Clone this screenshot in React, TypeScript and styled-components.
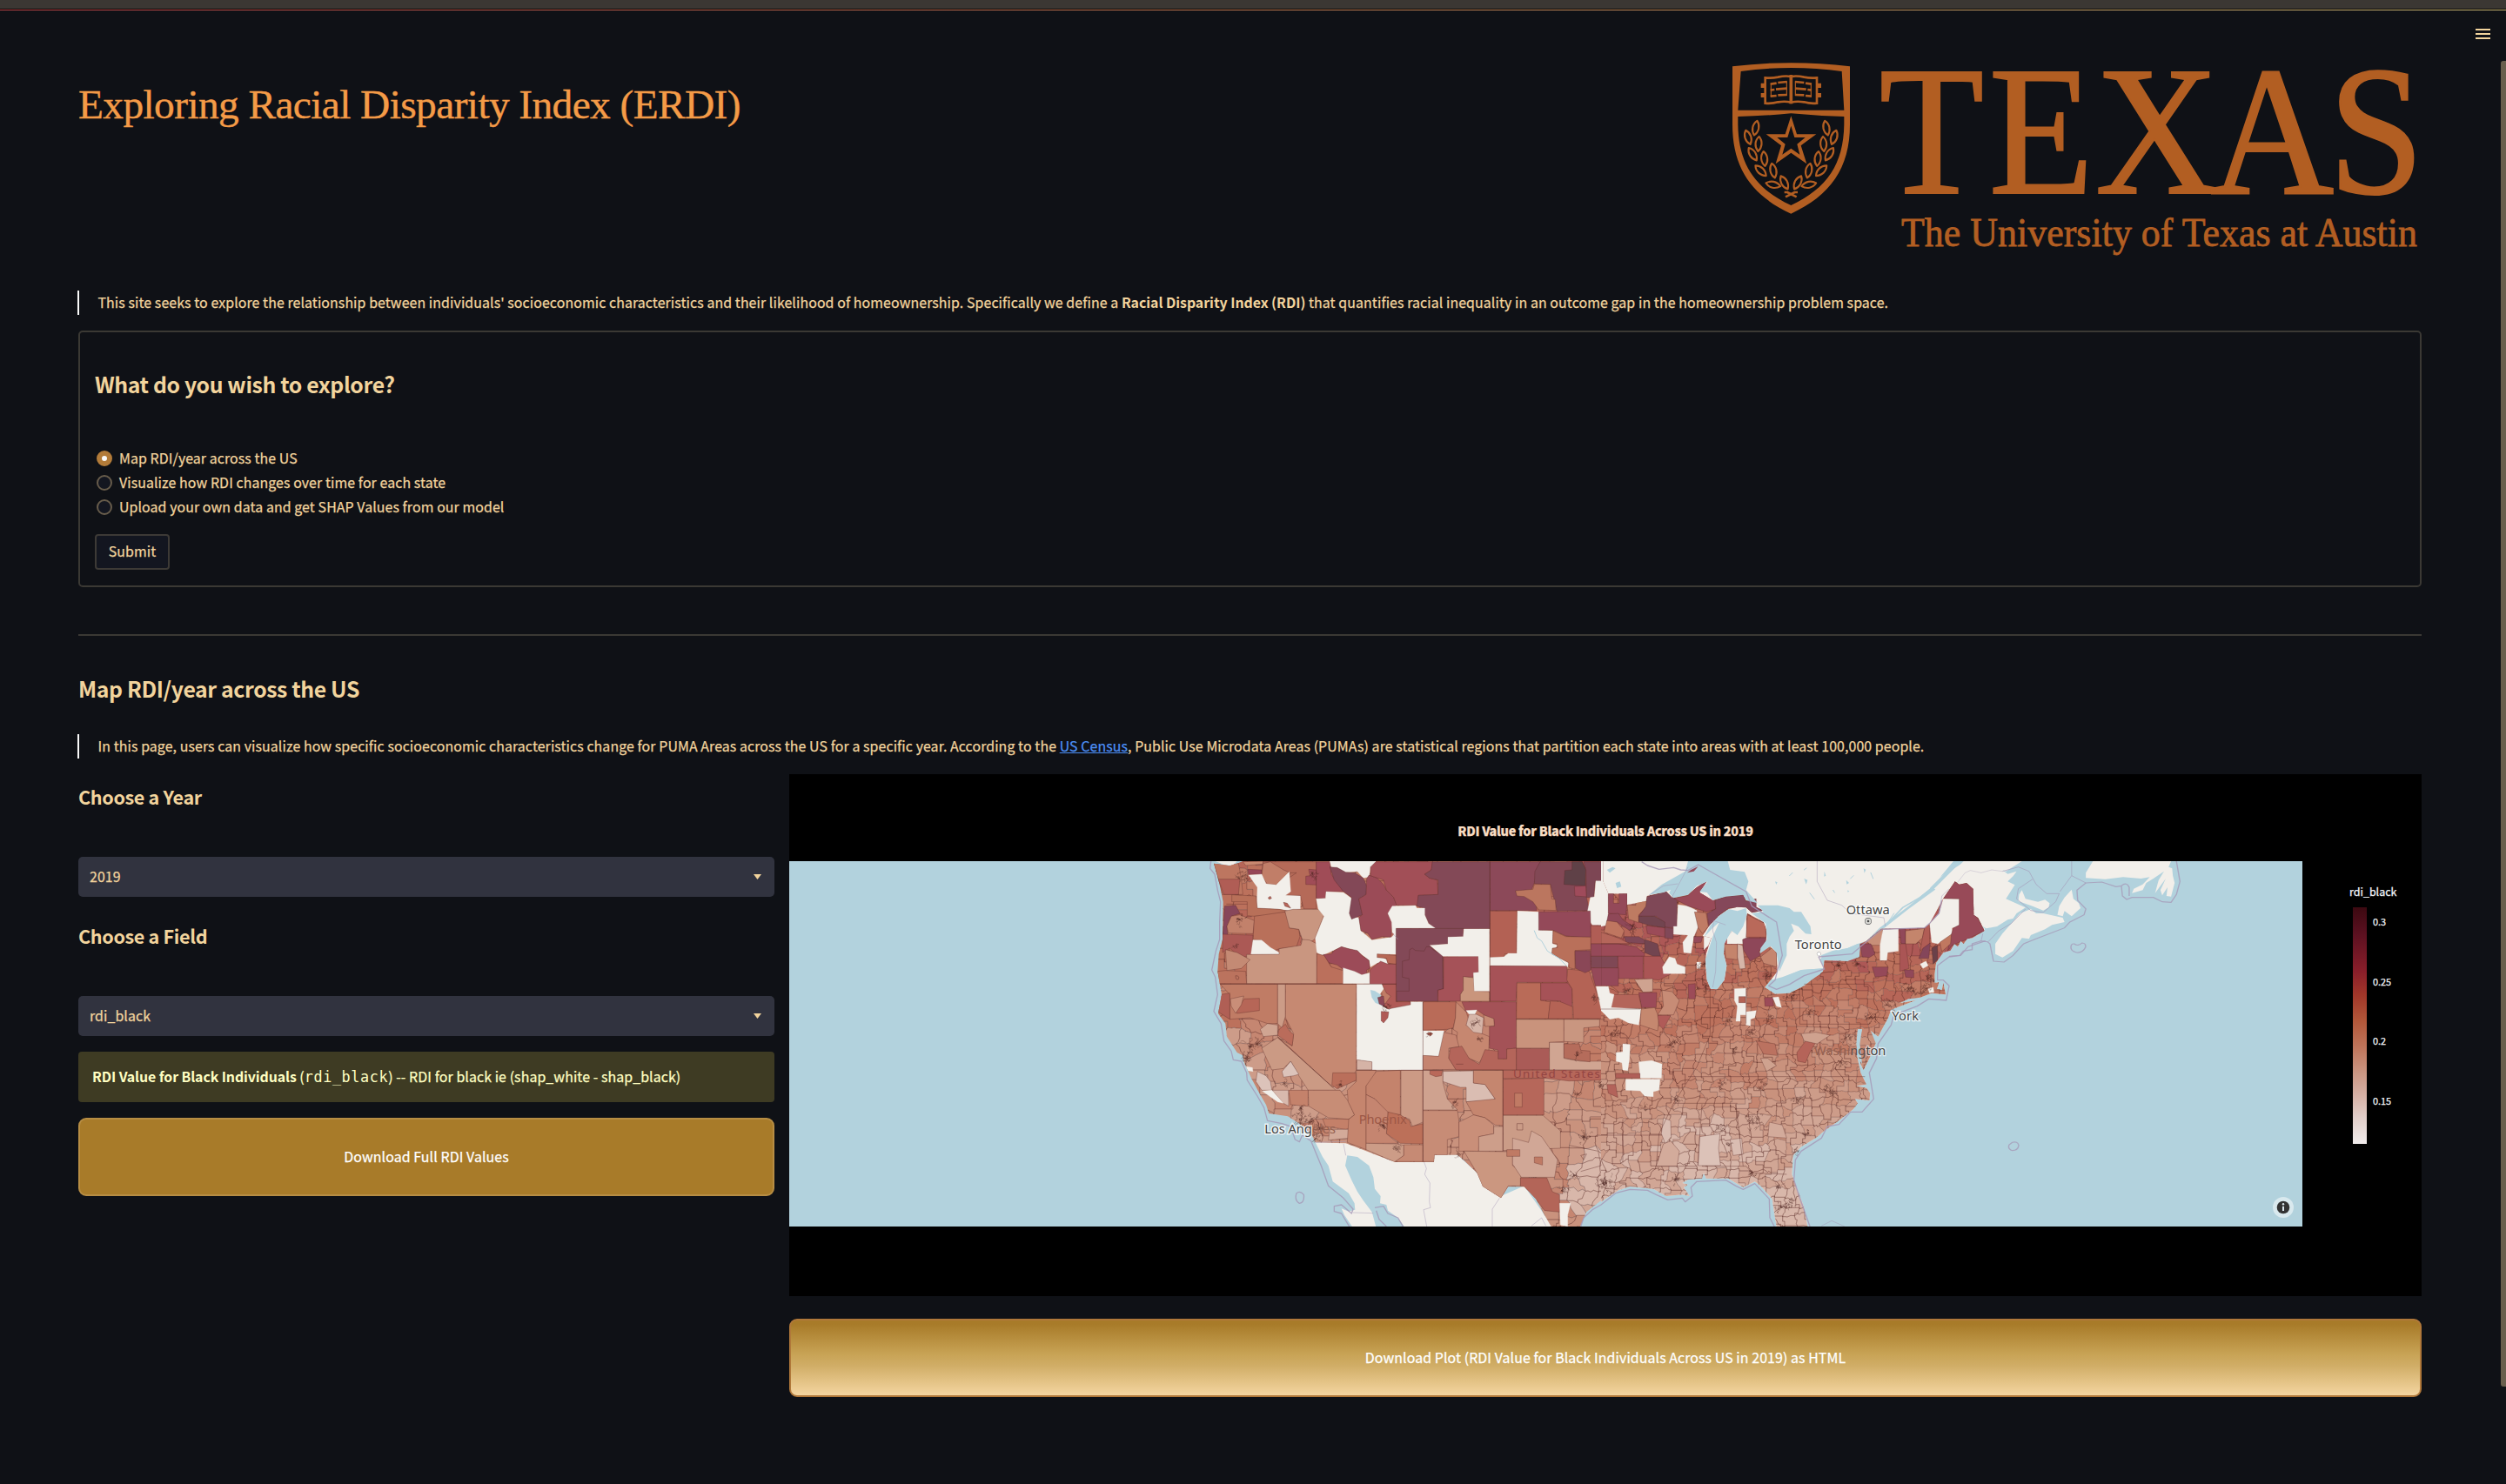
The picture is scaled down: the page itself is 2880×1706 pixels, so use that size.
import React from "react";
import styled, { createGlobalStyle } from "styled-components";

const SANS = `"Noto Sans CJK SC", "Open Sans", sans-serif`;

const GlobalStyle = createGlobalStyle`
  * { box-sizing: border-box; }
  html, body { margin: 0; padding: 0; background: #0f1116; }
  body {
    width: 2880px;
    height: 1706px;
    overflow: hidden;
    font-family: ${SANS};
    font-size: 15.9px;
    letter-spacing: 0.09px;
    line-height: 28px;
    color: #f2d49d;
  }
  h1, h2, h3, p { margin: 0; }
`;

const Page = styled.div`
  position: relative;
  width: 2880px;
  height: 1706px;
  background: #0f1116;
  -webkit-text-stroke: 0.25px currentColor;
`;
const TopBar = styled.div`
  height: 10px;
  background: #3b3733;
`;
const Decoration = styled.div`
  height: 2px;
  border-top: 1px solid #000;
  background: linear-gradient(90deg, #c0464a, #c27a52 50%, #c8b673);
`;
const MenuButton = styled.button`
  position: absolute;
  top: 33px;
  left: 2845px;
  width: 17px;
  height: 12px;
  padding: 0;
  border: 0;
  background: none;
  display: flex;
  flex-direction: column;
  justify-content: space-between;
`;
const MenuLine = styled.span`
  height: 2px;
  background: #f2d49d;
`;
const ScrollThumb = styled.div`
  position: absolute;
  top: 70px;
  right: 0;
  width: 6px;
  height: 1524px;
  border-radius: 3px 0 0 3px;
  background: #695e4d;
`;
const Main = styled.main`
  display: flex;
  flex-direction: column;
  padding: 0 97px 0 90px;
`;
const Header = styled.header`
  display: flex;
  justify-content: space-between;
  align-items: flex-start;
  height: 322px;
`;
const Title = styled.h1`
  margin-top: 79px;
  font-family: "Liberation Serif", "Times New Roman", serif;
  font-weight: 400;
  font-size: 47.4px;
  line-height: 58px;
  letter-spacing: -0.6px;
  color: #f49b47;
  white-space: nowrap;
  -webkit-text-stroke: 0.4px currentColor;
`;
const LogoSvg = styled.svg`
  margin-top: 48px;
  width: 803px;
  height: 240px;
  overflow: visible;
  letter-spacing: 0;
  -webkit-text-stroke: 0;
`;
const Quote = styled.blockquote<{ $top?: number }>`
  margin: ${(p) => p.$top ?? 0}px 0 0 -1px;
  height: 28px;
  padding-left: 21.5px;
  border-left: 2px solid #fafafa;
  white-space: nowrap;
`;
const Link = styled.a`
  color: #4c8ff5;
  text-decoration: underline;
`;
const FormBox = styled.form`
  margin-top: 18px;
  height: 295px;
  padding: 42px 17px 0;
  border: 2px solid #3b3934;
  border-radius: 5px;
`;
const SectionTitle = styled.h2<{ $top?: number }>`
  margin-top: ${(p) => p.$top ?? 0}px;
  font-size: 24.8px;
  line-height: 34px;
  font-weight: 700;
  letter-spacing: -0.38px;
  white-space: nowrap;
  -webkit-text-stroke: 0;
`;
const RadioList = styled.div`
  margin-top: 55px;
`;
const RadioRow = styled.label`
  display: flex;
  align-items: center;
  gap: 8px;
  height: 28px;
  padding-left: 2px;
  white-space: nowrap;
`;
const RadioMark = styled.span<{ $on?: boolean }>`
  width: 18px;
  height: 18px;
  border-radius: 50%;
  border: ${(p) => (p.$on ? "6px solid #b27b39" : "2px solid #675c4b")};
  background: ${(p) => (p.$on ? "#fafafa" : "#131620")};
`;
const SubmitButton = styled.button`
  display: block;
  margin-top: 17px;
  width: 86px;
  height: 41px;
  padding: 0 0 1px;
  border: 2px solid #3d3a36;
  border-radius: 4px;
  background: #131620;
  color: #f2d49d;
  font: inherit;
  letter-spacing: inherit;
`;
const Divider = styled.hr`
  width: 100%;
  height: 2px;
  margin: 54px 0 0;
  border: 0;
  background: #3b3934;
`;
const Columns = styled.section`
  display: grid;
  grid-template-columns: 800px 1876px;
  column-gap: 17px;
  margin-top: 18px;
`;
const Controls = styled.div`
  display: flex;
  flex-direction: column;
  padding-top: 11px;
`;
const FieldTitle = styled.h3`
  font-size: 21.6px;
  line-height: 30px;
  font-weight: 700;
  letter-spacing: -0.35px;
  -webkit-text-stroke: 0;
`;
const SelectBox = styled.div<{ $after: number }>`
  display: flex;
  align-items: center;
  justify-content: space-between;
  height: 46px;
  margin: 54px 0 ${(p) => p.$after}px;
  padding: 0 15px 0 13px;
  border-radius: 5px;
  background: #31333f;
`;
const Caret = styled.svg`
  width: 9px;
  height: 6px;
  display: block;
  fill: #f2d49d;
`;
const InfoBox = styled.div`
  height: 58px;
  padding: 15px 16px;
  border-radius: 4px;
  background: #3e3b23;
  color: #ffffc2;
  white-space: nowrap;
`;
const Strong = styled.strong<{ $spacing: number }>`
  font-weight: 700;
  letter-spacing: ${(p) => p.$spacing}px;
  -webkit-text-stroke: 0;
`;
const Code = styled.code`
  font-family: "DejaVu Sans Mono", monospace;
  font-size: 16.8px;
  letter-spacing: 0.6px;
  line-height: 1;
  -webkit-text-stroke: 0;
`;
const DownloadButton = styled.button<{ $gradient?: boolean }>`
  width: 100%;
  height: 90px;
  margin-top: ${(p) => (p.$gradient ? 26 : 18)}px;
  padding: 0;
  border-radius: 9px;
  border: 2px solid ${(p) => (p.$gradient ? "#b0783a" : "#b78d43")};
  background: ${(p) =>
    p.$gradient
      ? "linear-gradient(180deg, #a87b29 5%, #c8a355 45%, #d0ad66 60%, #f4d5a0 100%)"
      : "#a87b29"};
  color: #fff;
  font: inherit;
  letter-spacing: inherit;
`;
const Plot = styled.figure`
  margin: 0;
  height: 600px;
  background: #000;
  display: grid;
  grid-template-columns: 1739px 137px;
  grid-template-rows: 100px 420px 80px;
`;
const PlotTitle = styled.figcaption`
  grid-column: 1 / 3;
  padding-top: 51px;
  text-align: center;
  font-size: 14.4px;
  letter-spacing: -0.26px;
  font-weight: 900;
  color: #f8dcc2;
`;
const MapFrame = styled.div`
  position: relative;
  width: 1739px;
  height: 420px;
  letter-spacing: 0;
  -webkit-text-stroke: 0;
`;
const MapSvg = styled.svg`
  display: block;
  width: 1739px;
  height: 420px;
`;
const InfoIcon = styled.svg`
  position: absolute;
  right: 10px;
  bottom: 10px;
  width: 24px;
  height: 24px;
`;
const ColorBar = styled.div`
  padding: 26px 0 0 54px;
  letter-spacing: 0;
  color: #f2f5fa;
`;
const BarTitle = styled.div`
  height: 27px;
  font-size: 12.5px;
  line-height: 18px;
`;
const BarBody = styled.div`
  display: flex;
  gap: 7px;
  padding-left: 4px;
`;
const BarRamp = styled.div`
  width: 16px;
  height: 272px;
  background: linear-gradient(
    180deg,
    rgb(60, 9, 17) 0%,
    rgb(90, 16, 32) 11%,
    rgb(137, 30, 42) 27%,
    rgb(161, 54, 41) 37%,
    rgb(178, 87, 57) 48%,
    rgb(190, 116, 90) 59%,
    rgb(201, 147, 127) 69%,
    rgb(213, 175, 163) 79%,
    rgb(226, 207, 202) 89%,
    rgb(241, 236, 236) 100%
  );
`;
const BarTicks = styled.div`
  display: flex;
  flex-direction: column;
  gap: 52.5px;
  padding-top: 8px;
  font-size: 10.9px;
  line-height: 16px;
`;

/* ---------- Logo ---------- */

const ORANGE = "#b25e22";
const LEAVES: Array<[number, number, number]> = [
  [113, 262, 12], [87, 294, -18], [123, 317, 4], [103, 352, -32], [143, 368, -6],
  [131, 409, -46], [174, 409, -12], [174, 457, -78], [212, 450, -28],
];
const Branch = () => (
  <g fill="none" stroke={ORANGE} strokeWidth={6.5} strokeLinejoin="round">
    {LEAVES.map(([x, y, r], i) => (
      <path key={i} transform={`translate(${x} ${y}) rotate(${r})`} d="M0,-26 C14,-12 14,10 0,25 C-14,10 -14,-12 0,-26 Z" />
    ))}
    <path d="M212,483 L222,483 L254,499" strokeWidth={8} />
  </g>
);
const BookHalf = () => (
  <g fill="none" stroke={ORANGE}>
    <path strokeWidth={8} d="M235,84 Q215,80 190,86 Q170,90 146,88 V176 Q170,178 190,172 Q215,168 235,173" />
    <path strokeWidth={14} d="M138,107 V123 M138,141 V156" />
    <path strokeWidth={8} d="M164,110 L185,107 M190,105 L221,102 M164,131 L178,129 M183,128 L221,125 M164,152 L185,150 M190,148 L221,147" />
    <path strokeWidth={3.5} d="M220,100 V150 M166,108 V154" />
  </g>
);

const Logo = () => (
  <LogoSvg viewBox="1980 60 803 240">
    <g transform="translate(1980 60) scale(0.33333)">
      <path
        fill={ORANGE}
        fillRule="evenodd"
        d="M33,49 Q235,24 438,49 V250 C438,400 370,495 235,557 C100,495 33,400 33,250 Z M62,66 L52,200 H418 L410,66 Q235,42 62,66 Z M52,222 V250 C54,385 110,470 235,528 C360,470 416,385 418,250 V222 Q330,220 235,211 Q140,220 52,222 Z"
      />
      <BookHalf />
      <g transform="translate(470 0) scale(-1 1)"><BookHalf /></g>
      <path d="M235,78 V178" stroke={ORANGE} strokeWidth={11} />
      <Branch />
      <g transform="translate(470 0) scale(-1 1)"><Branch /></g>
      <path
        fill={ORANGE}
        fillRule="evenodd"
        d="M235,220 L255,283 H322 L269,322 L289,385 L235,347 L182,385 L201,322 L149,283 H215 Z M235,254 L223,294 H187 L215,317 L205,353 L235,332 L265,353 L256,317 L284,294 H247 Z"
      />
    </g>
    <g fill={ORANGE} fontFamily='"Liberation Serif", "Times New Roman", serif'>
      <text
        transform="scale(0.925 1)"
        x="2335 2471 2603.3 2746 2893"
        y="222"
        fontSize="213"
        stroke={ORANGE}
        strokeWidth="2.2"
      >
        TEXAS
      </text>
      <text x="2185" y="282.5" fontSize="46" textLength="593" lengthAdjust="spacingAndGlyphs" stroke={ORANGE} strokeWidth="0.8">
        The University of Texas at Austin
      </text>
    </g>
  </LogoSvg>
);

/* ---------- Map ---------- */

const LAND = "#f2efea";
const WATER = "#b2d2dd";
const BORDER = "#a597b6";
const EDGE = "#5a2a28";

const WEST_US =
  "M105,68 L160,76 L190,66 L205,60 L1500,60 L1500,1195 L1440,1230 L1390,1270 L1368,1320 L1268,1320 L1245,1280 L1215,1225 L1175,1183 L1120,1183 L1095,1222 L1032,1182 L1012,1135 L965,1090 L945,1073 L866,1073 L864,1098 L730,1098 L560,1033 L455,1030 L440,1000 L400,965 L360,940 L295,930 L285,900 L262,860 L235,810 L210,755 L205,730 L185,720 L150,665 L145,620 L120,585 L132,520 L118,440 L122,380 L135,330 L137,200 L125,140 Z";
const EAST_US =
  "M0,60 L6,60 L6,126 L25,172 L90,172 L90,210 L155,198 L158,180 L225,165 L245,185 L300,175 L330,150 L365,128 L340,168 L385,195 L430,180 L490,175 L500,195 L535,190 L535,218 L560,230 L520,238 L500,220 L470,218 L440,225 L405,250 L375,280 L350,318 L380,325 L362,380 L360,420 L365,470 L378,500 L400,502 L425,470 L433,420 L423,380 L425,345 L435,320 L490,260 L505,240 L560,270 L572,300 L568,345 L545,375 L580,352 L605,375 L608,440 L585,470 L565,495 L600,518 L650,515 L700,490 L765,440 L770,402 L850,405 L890,390 L893,345 L915,335 L965,293 L1115,290 L1133,275 L1180,188 L1220,130 L1235,140 L1260,135 L1283,155 L1285,245 L1300,255 L1322,300 L1280,325 L1262,328 L1250,345 L1240,335 L1230,355 L1218,345 L1205,368 L1180,375 L1155,410 L1150,450 L1150,480 L1165,478 L1158,500 L1175,505 L1180,480 L1188,520 L1140,515 L1100,530 L1060,535 L1030,550 L1085,540 L1000,572 L990,600 L955,665 L930,645 L950,680 L930,730 L905,780 L895,760 L885,690 L900,640 L885,640 L880,720 L895,790 L915,830 L880,835 L915,842 L928,860 L925,885 L875,880 L885,895 L870,915 L820,955 L770,990 L740,1015 L690,1045 L662,1075 L658,1140 L680,1200 L700,1255 L712,1320 L605,1320 L595,1260 L590,1225 L550,1180 L530,1165 L490,1185 L440,1155 L362,1154 L354,1135 L348,1154 L300,1158 L280,1170 L300,1175 L285,1185 L305,1215 L280,1210 L225,1215 L180,1190 L100,1182 L60,1195 L0,1235 Z";

type Region = [string, string];

const WEST_REGIONS: Region[] = [
  ["#bd7660", "105,68 190,68 200,120 205,175 135,175 120,120"],
  ["#b05d55", "120,122 195,122 190,175 140,175"],
  ["#c98870", "205,62 275,60 275,70 215,75"],
  ["#964656", "222,88 270,90 270,105 225,106"],
  ["#b56a58", "275,62 458,62 458,225 415,225 403,178 355,178 368,100 390,100 330,140 290,135 270,95"],
  ["#c17e68", "275,68 300,62 345,90 368,100 355,132 320,142 288,138 270,110"],
  ["#f2efea", "225,108 270,105 285,138 320,142 365,97 370,165 352,178 403,180 403,225 365,232 330,225 253,222 255,150"],
  ["#b7665a", "292,186 300,181 304,188 296,192"],
  ["#b7665a", "345,202 358,205 370,222 350,215"],
  ["#a04c57", "432,88 458,90 458,142 422,140 422,112 436,110"],
  ["#b87059", "167,176 250,180 255,222 330,226 365,232 300,247 245,250 220,248 220,200 167,200"],
  ["#87465a", "142,215 180,212 195,240 165,250 150,285 155,330 135,338"],
  ["#c2816b", "165,250 195,245 245,265 240,310 155,308 150,285"],
  ["#b9705a", "245,250 350,235 365,260 365,290 398,295 402,320 390,355 330,362 305,372 275,345 272,332 240,330"],
  ["#c99680", "350,232 378,226 465,226 485,245 452,330 435,340 410,330 398,295 365,290"],
  ["#ab5955", "135,312 240,315 235,390 190,388 160,360 135,375"],
  ["#f2efea", "240,332 270,332 300,358 330,375 330,381 233,381"],
  ["#c99680", "218,382 330,381 330,362 405,350 410,330 435,332 460,345 460,482 218,482"],
  ["#bb735e", "118,440 145,437 215,440 218,482 122,482"],
  ["#c48a74", "145,365 185,375 230,400 200,430 150,437"],
  ["#a04c57", "458,62 505,62 510,105 552,165 492,165 490,188 458,188"],
  ["#f2efea", "492,165 552,168 582,190 575,250 605,255 612,300 650,332 718,322 733,305 733,381 668,380 700,400 705,418 670,410 645,425 640,402 600,370 545,355 480,385 460,375 455,325 485,250 465,225 458,190 490,188"],
  ["#f2efea", "505,60 663,60 663,75 645,80 640,115 620,118 600,95 550,100 510,80"],
  ["#834857", "505,80 530,82 560,98 590,100 620,118 632,145 630,175 605,190 617,245 580,260 572,240 580,185 552,165 520,125"],
  ["#9b4b57", "632,120 640,108 668,118 690,140 700,160 725,185 735,210 705,240 720,275 715,322 685,320 650,330 635,308 612,300 605,255 617,245 605,190 630,175"],
  ["#a24f57", "663,62 860,62 855,90 832,105 848,118 875,125 878,175 810,178 810,212 735,212 725,185 700,160 690,125 645,110 645,80"],
  ["#834957", "858,62 1057,62 1057,293 865,293 845,272 832,245 830,222 805,215 810,178 878,175 878,125 848,118 832,105 855,90"],
  ["#f2efea", "720,215 800,213 805,222 832,222 832,245 845,275 868,291 735,291 735,320 720,305 718,270 705,240"],
  ["#8c4959", "1057,62 1232,62 1228,95 1210,135 1200,160 1145,165 1215,200 1218,230 1057,230"],
  ["#824855", "1212,95 1230,62 1375,62 1385,85 1390,185 1400,230 1288,232 1265,140 1210,138"],
  ["#bb765f", "1145,162 1205,157 1210,140 1265,140 1270,190 1282,192 1285,230 1225,228 1205,200 1175,182 1150,180"],
  ["#5f4147", "1315,92 1340,90 1340,62 1375,62 1388,90 1385,145 1312,140"],
  ["#9f4b5b", "1348,147 1388,145 1390,183 1350,180"],
  ["#7d4654", "1380,62 1447,62 1447,128 1420,130 1415,185 1390,185 1388,90"],
  ["#f2efea", "1447,60 1500,60 1500,175 1465,175 1465,280 1410,280 1390,250 1403,185 1417,183 1422,128 1447,128"],
  ["#8f4858", "1466,175 1482,178 1482,205 1500,205 1500,242 1466,240"],
  ["#c07c65", "1465,265 1500,270 1500,335 1450,305"],
  ["#b36154", "1057,232 1150,232 1148,378 1108,380 1105,392 1057,392"],
  ["#f2efea", "1152,232 1225,235 1230,298 1273,300 1273,345 1290,350 1270,375 1328,410 1325,425 1057,420 1057,392 1105,390 1120,378 1150,378"],
  ["#944959", "1225,235 1403,232 1405,322 1365,322 1318,318 1275,298 1225,298"],
  ["#b9705a", "1275,300 1318,320 1405,322 1405,365 1350,368 1350,432 1330,428 1328,410 1270,380 1272,360 1290,358 1288,345 1273,343"],
  ["#b05d55", "1405,282 1455,284 1450,305 1500,340 1500,345 1405,345"],
  ["#834957", "733,292 965,292 965,320 912,322 912,345 850,350 865,365 895,385 897,500 878,505 875,543 733,543"],
  ["#864857", "780,365 790,360 800,368 830,370 838,355 850,355 860,365 893,385 895,500 877,505 877,543 735,543 735,508 778,508 778,465 755,460 755,405 778,400"],
  ["#a55258", "897,390 1017,388 1018,443 1000,445 1000,460 965,460 965,505 955,520 955,543 878,543 878,505 897,500"],
  ["#c9957c", "965,458 1000,462 1003,508 1055,510 1055,543 955,543 955,520 965,505"],
  ["#f2efea", "850,350 912,346 912,322 965,320 967,294 1055,294 1055,508 1003,508 1000,445 1018,443 1017,388 895,388"],
  ["#9c4b58", "482,382 510,380 520,368 545,355 570,362 600,368 615,385 640,402 643,430 632,435 632,448 615,452 590,440 550,432 530,418 500,410"],
  ["#bb705c", "460,380 485,385 510,425 551,437 551,482 460,482"],
  ["#f2efea", "551,428 590,440 615,452 643,445 643,482 551,482"],
  ["#a9545a", "643,435 655,425 680,405 705,415 733,415 733,484 643,484"],
  ["#b76855", "668,380 733,385 733,415 705,412 700,395 668,392"],
  ["#c07c65", "127,484 325,484 325,620 290,620 230,600 160,605 160,520"],
  ["#b05f55", "127,520 160,515 160,605 120,580"],
  ["#cc9c87", "325,484 352,484 352,595 340,635 325,620"],
  ["#c68972", "352,484 596,484 596,780 590,792 575,800 515,840 325,665 345,680 375,697 380,655 352,600"],
  ["#b66657", "210,535 262,533 262,575 185,585 180,578"],
  ["#c98e78", "162,535 208,525 200,555 180,585 165,560"],
  ["#ba6c5b", "330,640 352,622 365,645 380,658 375,697 325,660"],
  ["#d0a592", "265,640 290,620 325,625 325,660 275,665"],
  ["#cb9a84", "325,668 515,840 565,890 540,850 430,850 398,800 370,750 345,775 305,780 270,705"],
  ["#c78d76", "430,850 540,850 570,890 590,935 570,950 500,945 432,905"],
  ["#ba6f5b", "595,790 515,790 512,832 530,845 575,825 596,815"],
  ["#c4826b", "363,850 430,850 430,905 370,900"],
  ["#c48069", "480,948 575,950 575,980 560,985 490,975"],
  ["#d3aa99", "505,985 568,985 575,1015 500,1022"],
  ["#dcc3ba", "255,785 285,800 300,820 305,850 270,850 250,820"],
  ["#dcc3ba", "340,785 370,750 398,795 380,800 345,805"],
  ["#d8b9ad", "306,850 362,850 363,905 345,895"],
  ["#f2efea", "272,853 305,850 345,895 325,890"],
  ["#f2efea", "215,768 238,772 240,785 220,782"],
  ["#f2efea", "598,484 685,484 690,500 670,530 690,560 733,555 783,553 783,545 826,545 826,780 650,780 650,752 598,745"],
  ["#d5b3a6", "598,745 650,752 650,780 598,780"],
  ["#b05a56", "685,484 733,484 733,545 783,545 783,555 705,570 690,560 715,525 700,515"],
  ["#b2d2dd", "645,505 660,508 682,522 675,535 690,560 662,548 650,530"],
  ["#8c4757", "670,530 690,525 694,562 675,552"],
  ["#b05a56", "682,578 708,580 705,600 690,618 682,610"],
  ["#b96b58", "826,545 940,545 938,600 930,635 910,640 826,643"],
  ["#f2efea", "826,645 898,645 898,705 880,733 826,730"],
  ["#b56252", "838,655 850,650 860,655 852,663"],
  ["#c68770", "940,545 975,580 985,610 975,625 1030,655 1055,665 1053,710 1020,755 985,740 940,690 945,650 930,640 938,600"],
  ["#a45257", "960,545 1148,545 1148,705 1115,708 1115,742 1085,742 1085,712 1055,705 1055,630 1072,628 1070,603 1050,600 1015,575 975,580"],
  ["#f2efea", "975,575 1012,573 1005,588 985,588"],
  ["#d6b5a8", "985,588 1010,588 1035,600 1030,655 1000,650 975,625"],
  ["#c78b74", "1035,590 1070,603 1072,628 1040,630"],
  ["#c58470", "826,730 880,733 898,650 940,660 950,700 915,705 915,740 940,778 826,780"],
  ["#b4655a", "920,705 960,698 985,740 1020,760 1040,710 1085,715 1085,742 1115,742 1115,708 1148,705 1148,780 940,780 915,740"],
  ["#a65257", "1057,421 1322,422 1325,478 1150,478 1147,543 1057,543"],
  ["#b96b58", "1150,480 1232,480 1232,540 1265,545 1258,603 1148,603"],
  ["#a65257", "1232,480 1325,480 1340,500 1340,562 1300,560 1300,542 1232,540"],
  ["#b46355", "1325,432 1400,440 1420,500 1445,570 1455,603 1345,603 1343,560 1340,500 1322,470"],
  ["#b46355", "1265,542 1300,545 1342,562 1342,603 1258,603"],
  ["#c9937c", "1148,605 1312,605 1312,682 1262,685 1262,705 1148,705"],
  ["#aa5b57", "1148,706 1262,706 1262,780 1148,780"],
  ["#c99680", "1312,605 1435,605 1435,630 1380,635 1380,685 1312,682"],
  ["#d0a592", "1262,685 1312,685 1312,740 1370,750 1445,750 1445,780 1262,780"],
  ["#b56c5b", "1312,690 1365,690 1370,712 1402,715 1402,752 1345,745 1312,738"],
  ["#954959", "1405,345 1500,345 1500,388 1405,388"],
  ["#7f4855", "1405,388 1500,388 1500,428 1405,428"],
  ["#954959", "1405,428 1500,428 1500,490 1420,490"],
  ["#8a4757", "1350,370 1403,368 1405,435 1385,445 1352,430"],
  ["#f2efea", "1423,492 1470,492 1470,515 1485,520 1480,540 1475,570 1500,570 1500,600 1470,610 1440,570"],
  ["#c5856e", "596,781 664,781 660,815 630,835 630,1055 565,1030 570,950 590,935 568,890 565,850 596,820"],
  ["#c4836c", "630,835 665,785 748,781 748,935 705,930 660,880 630,865"],
  ["#cc9a85", "750,781 826,781 826,960 790,975 780,950 750,940"],
  ["#bc7059", "705,925 748,935 780,955 785,975 826,965 826,1035 748,1033 700,1000"],
  ["#c58570", "630,865 660,880 705,925 700,1000 740,1033 630,1033"],
  ["#cc9c87", "630,1033 735,1035 760,1040 760,1075 730,1098 630,1055"],
  ["#c68a74", "760,1038 826,1038 826,1096 730,1096 760,1075"],
  ["#cfa28f", "826,781 895,781 895,825 910,880 945,918 826,918"],
  ["#dabdb2", "895,785 1000,783 1000,825 1040,830 1075,880 1065,885 975,890 975,840 955,840 895,820"],
  ["#b9695a", "850,782 893,782 890,800 870,803 850,795"],
  ["#c5866f", "1000,781 1102,781 1102,972 1075,970 1040,945 1000,935 975,890 1075,880 1040,830 1000,825"],
  ["#c78c76", "826,920 945,920 950,955 950,1010 910,1020 910,1073 866,1073 864,1096 826,1096"],
  ["#c98f79", "950,960 1000,935 1040,945 1070,970 1070,1000 1020,1010 1018,1060 950,1060"],
  ["#cd9e8a", "1018,1010 1070,1000 1070,975 1102,975 1102,1060 1018,1060"],
  ["#b6675a", "1102,781 1340,781 1450,781 1440,815 1330,818 1243,808 1102,810"],
  ["#b6675a", "1102,812 1243,808 1243,935 1102,935"],
  ["#c07a64", "1142,860 1168,860 1168,908 1142,908"],
  ["#cb9c87", "1102,937 1240,937 1300,990 1300,1050 1102,1058"],
  ["#cb9780", "967,1060 1135,1062 1135,1110 1165,1130 1162,1180 1120,1180 1095,1222 1032,1182 1012,1135"],
  ["#d1a796", "1135,1015 1190,1030 1200,990 1235,1010 1290,1090 1280,1150 1165,1150 1135,1105"],
  ["#bf7a64", "1115,1055 1160,1055 1160,1078 1115,1078"],
  ["#bf7a64", "1210,1080 1238,1080 1238,1108 1210,1100"],
  ["#b36558", "1162,1152 1253,1152 1272,1200 1297,1210 1297,1270 1245,1265 1215,1225 1175,1183 1162,1180"],
  ["#f2efea", "1297,1240 1335,1240 1325,1280 1325,1320 1300,1315"],
];

const EAST_REGIONS: Region[] = [
  ["#f2efea", "0,60 300,60 170,175 158,180 155,198 90,210 90,172 25,172 25,280 0,285"],
  ["#944959", "25,172 43,172 43,205 62,205 62,172 90,172 90,205 85,245 25,240"],
  ["#be7b62", "90,210 120,212 120,198 158,198 155,220 130,245 130,272 95,260"],
  ["#8f4858", "25,242 60,240 75,262 110,285 100,300 55,270 20,268"],
  ["#7f4857", "158,182 225,165 262,190 262,290 220,288 215,270 190,250 130,250 155,215"],
  ["#724550", "130,250 185,250 220,270 220,290 160,280 130,270"],
  ["#9b4b58", "155,282 220,290 220,322 160,310"],
  ["#814858", "220,288 250,292 248,328 220,325"],
  ["#7f4857", "80,320 130,320 155,335 150,345 85,340"],
  ["#724550", "150,330 195,345 205,388 180,388 150,375"],
  ["#bf7660", "20,265 55,270 80,300 70,325 10,305"],
  ["#b5665a", "0,305 60,325 100,345 0,345"],
  ["#f2efea", "265,210 300,215 330,230 335,285 320,320 310,378 285,375 282,340 300,315 250,312 250,285 262,285"],
  ["#c07c65", "322,235 362,238 370,285 350,310 335,290"],
  ["#954a59", "320,320 350,320 345,340 320,342"],
  ["#994a58", "250,188 300,178 340,140 368,130 342,165 365,168 393,195 395,225 365,235 300,215"],
  ["#85485a", "393,195 430,182 490,176 500,198 535,190 538,218 560,230 520,238 500,220 440,222 405,248 372,284 365,240 395,225"],
  ["#f2efea", "355,318 382,318 370,350 355,365"],
  ["#f2efea", "435,315 500,245 502,345 435,345"],
  ["#b9695a", "505,245 565,275 570,322 500,322"],
  ["#8e4759", "500,325 568,325 565,350 545,370 550,385 515,405 490,365 488,330"],
  ["#d6b5a8", "470,345 488,350 498,430 478,432 470,390"],
  ["#c4846c", "425,347 470,347 470,400 430,395"],
  ["#c5866f", "550,390 595,355 605,380 605,425 560,412"],
  ["#9c4b58", "0,345 60,345 120,355 150,378 150,388 0,388"],
  ["#7f4855", "0,388 58,388 58,428 0,428"],
  ["#9f4d58", "58,388 145,388 145,465 60,465"],
  ["#954959", "0,428 60,428 60,490 0,490"],
  ["#aa5555", "147,388 205,388 240,450 200,470 147,465"],
  ["#cfa390", "115,468 178,465 178,510 145,512"],
  ["#9c4b58", "130,513 192,513 190,565 140,565"],
  ["#b4655a", "35,520 130,520 140,568 35,568"],
  ["#f2efea", "212,425 235,390 255,395 262,415 290,425 290,448 215,448"],
  ["#f2efea", "330,408 345,408 342,430 330,430"],
  ["#f2efea", "0,492 25,492 30,515 45,520 35,565 138,570 130,625 95,618 60,600 30,605 0,575"],
  ["#c5886f", "138,570 185,565 200,600 195,645 135,625"],
  ["#b05b58", "195,592 240,592 215,640 200,625"],
  ["#c78c76", "210,505 245,510 270,540 250,590 195,590 215,560"],
  ["#9c4b58", "300,485 325,482 325,535 302,535"],
  ["#f2efea", "460,500 500,498 500,580 535,575 530,600 515,605 515,628 500,625 500,590 480,590 480,612 465,612 470,560 460,540"],
  ["#b36355", "475,527 498,527 498,548 475,548"],
  ["#9c4b58", "563,530 592,530 595,560 565,560"],
  ["#f2efea", "592,530 612,528 622,565 605,560"],
  ["#f2efea", "75,690 100,692 98,740 92,782 75,780 72,755 52,750 52,720 75,718"],
  ["#f2efea", "130,752 175,748 210,760 208,808 135,808"],
  ["#b05f57", "50,792 134,792 134,808 50,808"],
  ["#f2efea", "85,812 203,812 200,850 180,855 180,872 150,870 135,852 85,850"],
  ["#b3635a", "20,830 50,830 58,875 25,860"],
  ["#b56459", "675,720 705,680 740,685 720,720 705,755 678,750"],
  ["#bb7260", "535,680 600,690 608,730 560,725"],
  ["#cfa28f", "690,655 740,650 790,660 745,690 700,680"],
  ["#cfa28f", "550,740 575,740 605,765 570,785"],
  ["#dabdb2", "215,945 240,955 242,1010 222,1035 208,1000"],
  ["#d3ab9b", "215,1035 240,1025 270,1060 262,1112 190,1112"],
  ["#dcc2b8", "340,1010 410,1000 405,1050 412,1110 335,1110"],
  ["#dabdb2", "445,1020 485,1015 490,1070 455,1075"],
  ["#d3ab9b", "580,960 625,970 640,1015 575,1010"],
  ["#c88f79", "915,335 970,293 972,350 930,350"],
  ["#914859", "893,345 930,345 945,380 925,392 900,390"],
  ["#f2efea", "972,296 1025,293 1025,370 988,375 985,402 962,402 962,350"],
  ["#914859", "1028,293 1050,293 1050,345 1035,345"],
  ["#aa5555", "1030,345 1050,345 1062,430 1030,440"],
  ["#c4856c", "1050,300 1115,292 1108,325 1085,345 1050,345"],
  ["#b05d55", "1115,292 1133,275 1133,345 1100,370 1108,325"],
  ["#84465a", "1110,360 1135,342 1130,395 1095,395"],
  ["#f2efea", "1180,190 1235,190 1235,285 1210,290 1210,320 1160,345 1140,340 1133,275 1165,240"],
  ["#984a58", "1180,188 1220,130 1235,140 1260,135 1283,155 1285,245 1300,258 1322,300 1260,330 1210,350 1195,370 1205,320 1215,290 1235,280 1235,190"],
  ["#c07860", "1168,340 1208,312 1205,345 1175,372"],
  ["#6a4149", "1140,360 1160,350 1160,400 1145,415"],
  ["#f2efea", "1100,415 1120,405 1128,420 1110,430"],
  ["#f2efea", "1128,500 1145,495 1148,512 1132,514"],
  ["#954959", "935,425 990,425 985,455 945,460"],
  ["#914859", "1045,435 1078,435 1078,462 1050,460"],
];

const CITIES: Array<[number, number, number]> = [
  [210, 120, 28], [195, 262, 20], [258, 685, 16], [220, 735, 26], [232, 700, 24], [545, 828, 12],
  [400, 950, 30], [440, 960, 34], [470, 985, 26], [410, 915, 14], [690, 975, 22], [740, 1050, 16],
  [700, 560, 18], [1012, 615, 20], [1020, 672, 10], [938, 890, 14], [850, 657, 6], [1382, 1010, 26],
  [1345, 1145, 16], [1450, 1170, 26], [1310, 1192, 16], [1358, 728, 14], [1420, 532, 16], [1440, 830, 14],
  [1358, 865, 10], [183, 350, 8], [445, 105, 16], [455, 1015, 14], [350, 825, 12], [945, 1070, 10],
  [1550, 292, 22], [1800, 490, 26], [1790, 415, 18], [2015, 450, 28], [1685, 685, 26], [1880, 610, 16],
  [2020, 605, 20], [2095, 525, 24], [1955, 648, 18], [2165, 580, 20], [2375, 600, 32], [2435, 555, 22],
  [2295, 670, 30], [2500, 500, 36], [2570, 465, 26], [2560, 500, 26], [1963, 955, 34], [2118, 885, 22],
  [2220, 845, 16], [1700, 885, 14], [1855, 830, 16], [1900, 712, 14], [1995, 840, 18], [1850, 980, 16],
  [1455, 1170, 28], [1700, 1155, 18], [1525, 505, 14], [1490, 655, 18], [2060, 1255, 20], [2095, 1240, 18],
  [2050, 1185, 12], [2325, 415, 20], [2260, 420, 18], [2150, 1000, 14], [1590, 910, 12], [2240, 860, 14],
  [1960, 1140, 14], [1880, 1040, 10], [2110, 1060, 12], [2270, 760, 16],
];

const RAMP: Array<[number, number, number]> = [
  [158, 76, 86], [173, 88, 86], [182, 102, 88], [188, 113, 92], [193, 124, 102],
  [197, 134, 113], [201, 146, 125], [205, 156, 137], [209, 166, 149], [216, 183, 170],
];

function seeded(seed: number) {
  let s = seed;
  return () => {
    s = (s * 1664525 + 1013904223) % 4294967296;
    return s / 4294967296;
  };
}

function tone(x: number, y: number, n: number) {
  let t: number;
  if (x < 1300) t = y < 420 ? 3.2 : y < 620 ? 4 : 6;
  else t = 1.8 + Math.max(0, y - 330) / 118;
  if (x > 1620 && x < 1930 && y > 890 && y < 1115) t += 1.1;
  if (x > 2100 && y > 480) t += 0.3;
  const v = Math.max(0, Math.min(RAMP.length - 1, t + (n - 0.5) * 2.2));
  const [r, g, b] = RAMP[Math.round(v)];
  return `rgb(${r},${g},${b})`;
}

/* Irregular tessellation that stands for the small statistical areas. */
function buildMesh(x0: number, y0: number, x1: number, y1: number, step: number, seed: number) {
  const rnd = seeded(seed);
  const cols = Math.ceil((x1 - x0) / step) + 1;
  const rows = Math.ceil((y1 - y0) / step) + 1;
  const v: number[][][] = [];
  for (let j = 0; j <= rows; j++) {
    v.push([]);
    for (let i = 0; i <= cols; i++) {
      v[j].push([x0 + (i + (rnd() - 0.5) * 0.75 + (j % 2) * 0.35) * step, y0 + (j + (rnd() - 0.5) * 0.75) * step]);
    }
  }
  const wiggle = (a: number[], b: number[]) => {
    const pts: number[][] = [];
    if (rnd() < 0.4) {
      pts.push([a[0], (a[1] + b[1]) / 2], [b[0], (a[1] + b[1]) / 2]);
    } else {
      for (const f of [0.25, 0.5, 0.75]) {
        pts.push([a[0] + (b[0] - a[0]) * f + (rnd() - 0.5) * step * 0.28, a[1] + (b[1] - a[1]) * f + (rnd() - 0.5) * step * 0.28]);
      }
    }
    return pts;
  };
  const h: number[][][][] = [];
  const w: number[][][][] = [];
  for (let j = 0; j <= rows; j++) {
    h.push([]);
    w.push([]);
    for (let i = 0; i <= cols; i++) {
      h[j].push(i < cols ? wiggle(v[j][i], v[j][i + 1]) : []);
      w[j].push(j < rows ? wiggle(v[j][i], v[j + 1][i]) : []);
    }
  }
  const groups: Record<string, string> = {};
  for (let j = 0; j < rows; j++) {
    let prev = "";
    for (let i = 0; i < cols; i++) {
      const ring = [
        v[j][i], ...h[j][i], v[j][i + 1], ...w[j][i + 1], v[j + 1][i + 1],
        ...[...h[j + 1][i]].reverse(), v[j + 1][i], ...[...w[j][i]].reverse(),
      ];
      const fill = rnd() < 0.25 && prev ? prev : tone(v[j][i][0], v[j][i][1], rnd());
      prev = fill;
      groups[fill] = (groups[fill] || "") + "M" + ring.map((p) => `${p[0].toFixed(0)},${p[1].toFixed(0)}`).join("L") + "Z";
    }
  }
  return Object.entries(groups);
}

function cityPath([cx, cy, r]: [number, number, number], k: number) {
  const rnd = seeded(77 + k * 13);
  let d = "";
  const n = Math.round(r * 0.75);
  for (let i = 0; i < n; i++) {
    const a = rnd() * Math.PI * 2;
    const q = Math.pow(rnd(), 1.4) * r;
    let x = cx + Math.cos(a) * q;
    let y = cy + Math.sin(a) * q;
    d += `M${x.toFixed(1)},${y.toFixed(1)}`;
    for (let m = 0; m < 4; m++) {
      x += (rnd() - 0.5) * 13;
      y += (rnd() - 0.5) * 13;
      d += `L${x.toFixed(1)},${y.toFixed(1)}`;
    }
  }
  return d;
}

const WEST_MESH = buildMesh(80, 40, 1500, 1340, 46, 5);
const EAST_MESH = buildMesh(1420, 40, 2780, 1340, 31, 11);

const Mesh = ({ cells }: { cells: Array<[string, string]> }) => (
  <g stroke={EDGE} strokeOpacity={0.45} strokeWidth={1.7}>
    {cells.map(([fill, d]) => <path key={fill} fill={fill} d={d} />)}
  </g>
);
const Regions = ({ items }: { items: Region[] }) => (
  <g strokeLinejoin="round">
    {items.map(([fill, pts], i) => {
      const plain = fill === LAND || fill === WATER;
      return (
        <polygon key={i} points={pts} fill={fill} stroke={plain ? fill : EDGE} strokeOpacity={plain ? 1 : 0.5} strokeWidth={plain ? 1 : 2} />
      );
    })}
  </g>
);

const USMap = () => (
  <MapSvg viewBox="-1359 60 5217 1260" preserveAspectRatio="none">
    <defs>
      <clipPath id="west"><path d={WEST_US} /></clipPath>
      <clipPath id="east"><path transform="translate(1440 0)" d={EAST_US} /></clipPath>
    </defs>
    <rect x="-1359" y="60" width="5217" height="1260" fill={WATER} />

    {/* Mexico, Baja California */}
    <path fill={LAND} d="M455,1030 L560,1028 L730,1090 L866,1070 L945,1073 L1012,1135 L1095,1215 L1175,1180 L1245,1280 L1275,1325 L765,1325 L740,1290 L705,1265 L700,1245 L678,1240 L680,1215 L660,1190 L655,1150 L640,1110 L600,1080 L565,1075 L558,1110 L580,1160 L600,1200 L620,1230 L650,1270 L665,1325 L585,1325 L555,1280 L545,1258 L570,1268 L592,1262 L590,1240 L570,1205 L515,1165 L500,1110 L480,1080 Z" />
    <path fill={LAND} d="M110,60 H185 L170,75 L140,72 Z" />

    {/* Canada */}
    <g transform="translate(1440 0)">
      <path fill={LAND} d="M-10,60 H1215 L1140,150 L1060,215 L960,290 L915,335 L885,345 L850,360 L765,385 L755,400 L770,430 L690,435 L625,460 L585,470 L560,500 L0,500 Z" />
      <path fill={LAND} d="M1250,60 L1150,160 L1060,225 L975,292 L1115,295 L1180,340 L1280,300 L1325,300 L1440,180 L1440,60 Z" />
      <path fill={LAND} d={EAST_US} />
      <path fill={LAND} d="M1380,310 L1358,345 L1370,375 L1400,395 L1410,310 Z" />
    </g>
    <g transform="translate(2640 0) scale(1.2245 1)">
      <path fill={WATER} d="M205,60 H660 V420 H100 V290 L60,290 L110,60 Z" />
      <path fill={LAND} d="M-60,140 L20,80 L48,60 L205,60 L160,95 L150,90 L165,104 L190,95 L180,112 L165,130 L185,142 L160,190 L215,220 L190,240 L180,258 L165,262 L135,285 L105,292 L85,280 L75,250 Z" />
      <path fill={LAND} d="M175,275 L200,240 L230,225 L245,240 L265,240 L320,255 L325,270 L290,280 L270,295 L230,315 L225,328 L205,325 L180,370 L150,392 L130,380 L130,345 L150,310 Z" />
      <path fill={LAND} d="M345,158 L350,190 L365,205 L370,222 L345,250 L325,232 L320,250 L305,245 L310,215 L325,185 Z" />
      <path fill={LAND} d="M205,160 L215,190 L250,200 L270,193 L283,205 L280,220 L265,230 L235,215 L195,198 L197,175 Z" />
      <path fill={LAND} d="M405,60 L625,60 L618,80 L628,85 L630,110 L635,135 L625,182 L612,180 L615,150 L600,178 L595,160 L610,120 L580,170 L590,125 L605,95 L575,120 L555,135 L545,160 L515,170 L520,155 L545,140 L565,115 L540,120 L490,115 L440,122 L385,118 L385,100 Z" />
      <g fill="none" stroke={BORDER} strokeWidth={3.4} strokeOpacity={0.75}>
        <path d="M640,60 L650,130 L640,175 L625,202 L600,200 L575,185 L515,185 L500,192 L488,180 L485,145 Q500,130 507,150 L507,180 M485,145 L470,148 L430,132 L385,135 L360,160 L362,195 L385,225 L380,245 L340,270 L325,290 L240,330 L210,345 L180,385 L155,408 L125,405 L115,345 L108,338 L90,335 L65,345 L65,365 L40,370 L30,385 L0,388" />
        <path d="M352,345 q12,10 22,-3 q12,0 10,15 q-8,20 -25,18 q-20,-5 -15,-25 q2,-6 8,-5Z M178,1030 q15,-5 18,10 q-2,18 -18,18 q-14,-5 -9,-20 Z" />
        <path strokeWidth={2.2} d="M150,95 L195,80 L225,95 L245,140 L275,172 L310,172 L300,200 L265,237 L230,230 L190,190 L195,155 L235,122 M345,60 V110 L312,165 M345,110 L385,135 M110,338 L140,300 L175,275 L215,225 M95,310 L90,335" />
        <path strokeWidth={2} strokeOpacity={0.45} d="M0,170 L45,100 L60,92 L90,100 L120,90 L150,95" />
      </g>
    </g>

    {/* Statistical areas */}
    <g clipPath="url(#west)">
      <Mesh cells={WEST_MESH} />
      <Regions items={WEST_REGIONS} />
    </g>
    <g clipPath="url(#east)">
      <Mesh cells={EAST_MESH} />
      <g transform="translate(1440 0)"><Regions items={EAST_REGIONS} /></g>
    </g>
    <g clipPath="url(#west)" fill="none" stroke={EDGE} strokeOpacity={0.6} strokeWidth={2}>
      <path d="M148,208 H220 M325,668 L515,840 M1102,781 V1060 M1148,605 H1455 M597,781 H1102 M118,484 H733 M1057,62 V545 M826,545 V1096 M1150,965 h20 v22 h-20 z M1330,1040 L1430,1060 L1440,1110 L1370,1130 M1370,1075 l20,-5 -10,20 z M180,455 q15,0 10,12 q-10,5 -10,-12 M965,760 H940" />
    </g>
    <g fill="none" stroke="#4a2420" strokeOpacity={0.5} strokeWidth={1.6}>
      {CITIES.map((c, k) => <path key={k} d={cityPath(c, k)} />)}
    </g>
    <g transform="translate(1440 0)" fill="none" stroke={EDGE} strokeOpacity={0.5} strokeWidth={2.4}>
      <path d="M0,345 H150 M0,570 H135 M250,895 H470 M300,803 H910 M685,622 H925 M376,500 V660 L330,770 L250,895 L200,1000 L190,1112 H330 M348,898 L333,1110 M465,898 L490,1112 M360,1112 H500 L520,1135 L640,1140 M700,484 H920 L990,560 M685,520 V622 M75,950 V1100 M0,1005 H210 M500,498 V620" />
    </g>

    {/* Lakes */}
    <g transform="translate(1440 0)" fill={WATER}>
      <path d="M300,60 L437,60 L445,90 L495,97 L508,130 L500,160 L540,205 L500,195 L490,176 L430,182 L385,195 L365,168 L340,165 L368,130 L330,145 L300,176 L250,187 L235,170 L240,158 L215,168 L165,176 L210,140 L290,95 Z" />
      <path d="M540,212 L610,212 L650,222 L665,235 L690,235 L722,285 L725,312 L705,310 L680,285 L655,275 L665,300 L650,320 L640,345 L640,385 L615,440 L605,375 L585,353 L548,378 L550,360 L572,330 L568,275 L520,240 L560,235 Z" />
      <path d="M405,250 L440,225 L470,232 L500,222 L503,245 L490,285 L470,315 L450,300 L425,345 L423,380 L433,420 L425,470 L400,502 L378,500 L365,470 L360,400 L385,320 L408,270 L385,290 L355,322 L378,280 Z" />
      <path d="M565,495 L585,470 L625,462 L690,435 L765,430 L755,450 L700,480 L650,512 L600,515 Z" />
      <path d="M758,385 L800,368 L850,360 L885,345 L893,360 L890,390 L850,402 L770,402 Z" />
      <path d="M885,640 L900,640 L892,690 L900,760 L888,740 L880,690 Z M930,645 L945,665 L955,668 L948,690 Z" />
      <path d="M20,90 l20,-10 10,5 -20,15z M50,135 l15,-5 5,18 -15,5z M700,120 l12,5 -5,15z M770,95 l5,15 -6,3z M845,125 l10,10 -8,5z M905,85 l8,4 -5,12z M600,130 l8,3 -4,8z M850,160 l6,4 -6,3z" />
    </g>
    <g transform="translate(1440 0)" fill="none" stroke={WATER} strokeLinecap="round">
      <path strokeWidth={5} d="M980,282 L1040,220 L1100,185 L1150,145" />
      <path strokeWidth={12} d="M1140,155 L1200,95 L1235,60" />
      <path strokeWidth={3} d="M650,110 l10,-10 M720,170 l15,20 M860,120 l10,-10 M700,90 l8,-6 M800,160 l5,8 M930,100 l8,20 M1010,240 l-20,30" />
      <path strokeWidth={3} d="M-230,300 l10,25 15,10 20,35 40,25 25,25" />
    </g>
    <path transform="translate(1440 0)" fill="#944959" d="M297,100 L310,90 L335,78 L320,95 Z" />

    {/* Maritime and national borders */}
    <g fill="none" stroke={BORDER} strokeWidth={4} strokeOpacity={0.8} strokeLinejoin="round">
      <path d="M95,60 L92,85 L108,105 L118,160 L128,200 L125,270 L125,330 L112,370 L98,435 L110,460 L118,520 L105,578 L130,620 L140,680 L165,715 L172,745 L200,750 L218,790 L220,815 L255,870 L278,910 L290,955 L340,965 L370,975 L385,1020 L400,1028 L410,1005 L440,1025 L475,1110 L500,1180 L550,1220 L585,1260 L580,1275 L545,1245 L520,1250 L520,1268 L545,1275 L575,1325 M390,1205 q12,-10 25,5 q3,28 -15,30 q-18,-10 -10,-35Z M660,1255 L690,1250 L705,1275 L740,1290 L760,1325 M665,1265 L675,1295 L700,1320" />
      <path strokeOpacity={0.45} strokeWidth={3} d="M830,1098 L838,1120 L832,1140 L850,1170 L848,1235 L852,1255 L828,1262 L840,1325 M1090,1222 L1065,1260 L1065,1320 M552,1035 L560,1075 M585,1272 L655,1274 M1200,1318 L1235,1290 L1250,1318 M455,1030 L560,1027 M718,305 L740,330" />
      <g transform="translate(1440 0)">
        <path d="M-70,1320 L-60,1290 L-30,1262 L0,1245 L50,1205 L100,1192 L160,1195 L190,1210 L230,1228 L280,1222 L290,1235 L315,1215 L310,1185 L330,1165 L430,1160 L465,1180 L490,1192 L530,1172 L580,1225 L582,1290 L600,1325 M722,1325 L690,1235 L665,1160 L670,1090 L690,1060 L760,1015 L780,975 L820,968 L860,925 L900,925 L940,880 L925,790 L950,740 L955,690 L1000,625 L1010,590 L1090,560 L1130,535 L1190,540 L1200,490 L1180,470 L1160,470 L1160,420 L1200,390 L1240,385 L1265,355 L1325,335" />
        <path d="M140,62 L160,75 L200,88 L250,82 L275,90 L300,92 L335,72 L420,120 L500,165 L520,215 L555,238 L605,270 L625,385 L610,430 L600,470 L578,490 L605,502 L650,485 L700,455 L770,432 L750,390 L865,380 L900,350 L968,295 L1115,290 L1135,272 L1165,240 L1175,195" />
        <path strokeWidth={2.4} strokeOpacity={0.6} d="M165,178 L215,145 L265,138 M245,183 L300,80 M388,265 L385,300 L398,340 L395,440 L385,495 M388,265 L430,280 M745,60 V130 L780,195 L830,212 L860,240 L975,255 L980,285 M1165,240 L1175,180 L1200,155 M760,1318 L795,1300 L840,1320" />
      </g>
    </g>

    {/* Place names */}
    <g fontFamily='"Noto Sans", "Open Sans", sans-serif' fontSize="44" fill="#444" paintOrder="stroke">
      <text x="280" y="998" textLength="245">
        <tspan stroke="#fff" strokeOpacity="0.75" strokeWidth="9">Los Ang</tspan>
        <tspan fill="#94604f">eles</tspan>
      </text>
      <text x="605" y="965" textLength="165" fill="#9c5746">Phoenix</text>
      <text x="1137" y="808" textLength="300" fontSize="40" fill="#934543">United States</text>
      <g transform="translate(1440 0)">
        <text x="845" y="242" textLength="150" stroke="#fff" strokeOpacity="0.75" strokeWidth="8">Ottawa</text>
        <text x="668" y="364" textLength="162" stroke="#fff" strokeOpacity="0.75" strokeWidth="8">Toronto</text>
        <text x="1003" y="610" textLength="92" stroke="#fff" strokeOpacity="0.75" strokeWidth="8">York</text>
        <text x="735" y="730" textLength="247">
          <tspan fill="#94604f">Washi</tspan>
          <tspan fill="#5f4f4c">ng</tspan>
          <tspan stroke="#fff" strokeOpacity="0.6" strokeWidth="7">ton</tspan>
        </text>
        <circle cx="921" cy="267" r="10" fill="#d8d8d4" stroke="#5a5a5a" strokeWidth="3.5" />
        <circle cx="921" cy="267" r="4" fill="#4b4b4b" />
        <circle cx="751" cy="380" r="6" fill="#fff" stroke="#8d8d8d" strokeWidth="2.5" />
      </g>
    </g>
  </MapSvg>
);

const OPTIONS = [
  "Map RDI/year across the US",
  "Visualize how RDI changes over time for each state",
  "Upload your own data and get SHAP Values from our model",
];
const TICKS = ["0.3", "0.25", "0.2", "0.15"];

const Select = ({ value, after }: { value: string; after: number }) => (
  <SelectBox $after={after}>
    {value}
    <Caret viewBox="0 0 9 6"><path d="M0,0 H9 L4.5,6 Z" /></Caret>
  </SelectBox>
);

export default function App() {
  return (
    <Page>
      <GlobalStyle />
      <TopBar />
      <Decoration />
      <MenuButton aria-label="Menu">
        <MenuLine />
        <MenuLine />
        <MenuLine />
      </MenuButton>
      <Main>
        <Header>
          <Title>Exploring Racial Disparity Index (ERDI)</Title>
          <Logo />
        </Header>
        <Quote>
          This site seeks to explore the relationship between individuals' socioeconomic characteristics and their
          likelihood of homeownership. Specifically we define a{" "}
          <Strong $spacing={-0.04}>Racial Disparity Index (RDI)</Strong> that quantifies racial inequality in an
          outcome gap in the homeownership problem space.
        </Quote>
        <FormBox>
          <SectionTitle>What do you wish to explore?</SectionTitle>
          <RadioList>
            {OPTIONS.map((label, i) => (
              <RadioRow key={label}>
                <RadioMark $on={i === 0} />
                {label}
              </RadioRow>
            ))}
          </RadioList>
          <SubmitButton type="button">Submit</SubmitButton>
        </FormBox>
        <Divider />
        <SectionTitle $top={43}>Map RDI/year across the US</SectionTitle>
        <Quote $top={36}>
          In this page, users can visualize how specific socioeconomic characteristics change for PUMA Areas across
          the US for a specific year. According to the <Link>US Census</Link>, Public Use Microdata Areas (PUMAs) are
          statistical regions that partition each state into areas with at least 100,000 people.
        </Quote>
        <Columns>
          <Controls>
            <FieldTitle>Choose a Year</FieldTitle>
            <Select value="2019" after={30} />
            <FieldTitle>Choose a Field</FieldTitle>
            <Select value="rdi_black" after={18} />
            <InfoBox>
              <Strong $spacing={-0.1}>RDI Value for Black Individuals</Strong> (<Code>rdi_black</Code>) -- RDI for black
              ie (shap_white - shap_black)
            </InfoBox>
            <DownloadButton>Download Full RDI Values</DownloadButton>
          </Controls>
          <div>
            <Plot>
              <PlotTitle>RDI Value for Black Individuals Across US in 2019</PlotTitle>
              <MapFrame>
                <USMap />
                <InfoIcon viewBox="0 0 24 24">
                  <circle cx="12" cy="12" r="12" fill="#fff" fillOpacity="0.5" />
                  <circle cx="12" cy="12" r="7.3" fill="#333" />
                  <path d="M12,10.8 V16" stroke="#dce9ee" strokeWidth="2" />
                  <circle cx="12" cy="8.3" r="1.2" fill="#dce9ee" />
                </InfoIcon>
              </MapFrame>
              <ColorBar>
                <BarTitle>rdi_black</BarTitle>
                <BarBody>
                  <BarRamp />
                  <BarTicks>
                    {TICKS.map((t) => <span key={t}>{t}</span>)}
                  </BarTicks>
                </BarBody>
              </ColorBar>
            </Plot>
            <DownloadButton $gradient>
              Download Plot (RDI Value for Black Individuals Across US in 2019) as HTML
            </DownloadButton>
          </div>
        </Columns>
      </Main>
      <ScrollThumb />
    </Page>
  );
}
